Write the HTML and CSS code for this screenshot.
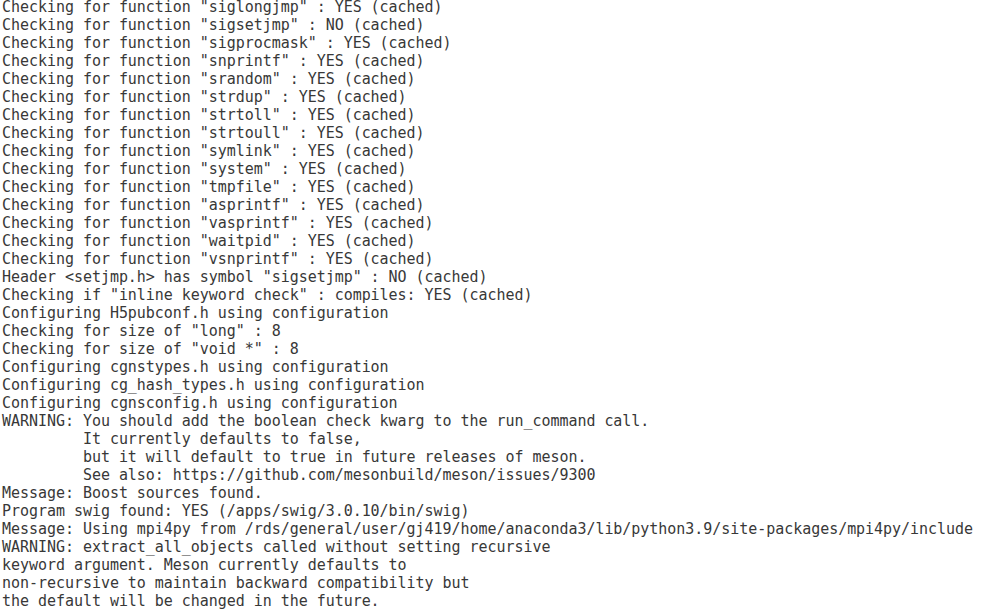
FILE: index.html
```html
<!DOCTYPE html>
<html>
<head>
<meta charset="utf-8">
<link rel="stylesheet" href="styles.css">
</head>
<body>
<pre class="term">Checking for function "siglongjmp" : YES (cached)
Checking for function "sigsetjmp" : NO (cached)
Checking for function "sigprocmask" : YES (cached)
Checking for function "snprintf" : YES (cached)
Checking for function "srandom" : YES (cached)
Checking for function "strdup" : YES (cached)
Checking for function "strtoll" : YES (cached)
Checking for function "strtoull" : YES (cached)
Checking for function "symlink" : YES (cached)
Checking for function "system" : YES (cached)
Checking for function "tmpfile" : YES (cached)
Checking for function "asprintf" : YES (cached)
Checking for function "vasprintf" : YES (cached)
Checking for function "waitpid" : YES (cached)
Checking for function "vsnprintf" : YES (cached)
Header &lt;setjmp.h&gt; has symbol "sigsetjmp" : NO (cached)
Checking if "inline keyword check" : compiles: YES (cached)
Configuring H5pubconf.h using configuration
Checking for size of "long" : 8
Checking for size of "void *" : 8
Configuring cgnstypes.h using configuration
Configuring cg_hash_types.h using configuration
Configuring cgnsconfig.h using configuration
WARNING: You should add the boolean check kwarg to the run_command call.
         It currently defaults to false,
         but it will default to true in future releases of meson.
         See also: https://github.com/mesonbuild/meson/issues/9300
Message: Boost sources found.
Program swig found: YES (/apps/swig/3.0.10/bin/swig)
Message: Using mpi4py from /rds/general/user/gj419/home/anaconda3/lib/python3.9/site-packages/mpi4py/include
WARNING: extract_all_objects called without setting recursive
keyword argument. Meson currently defaults to
non-recursive to maintain backward compatibility but
the default will be changed in the future.</pre>
</body>
</html>
```
FILE: styles.css
```css
html, body {
  margin: 0;
  padding: 0;
  background: #ffffff;
  overflow: hidden;
}
.term {
  margin: -2px 0 0 0;
  padding: 0 0 0 2px;
  font-family: "DejaVu Sans Mono", monospace;
  font-size: 15px;
  line-height: 18px;
  letter-spacing: -0.04px;
  color: #383838;
  white-space: pre;
}
```
